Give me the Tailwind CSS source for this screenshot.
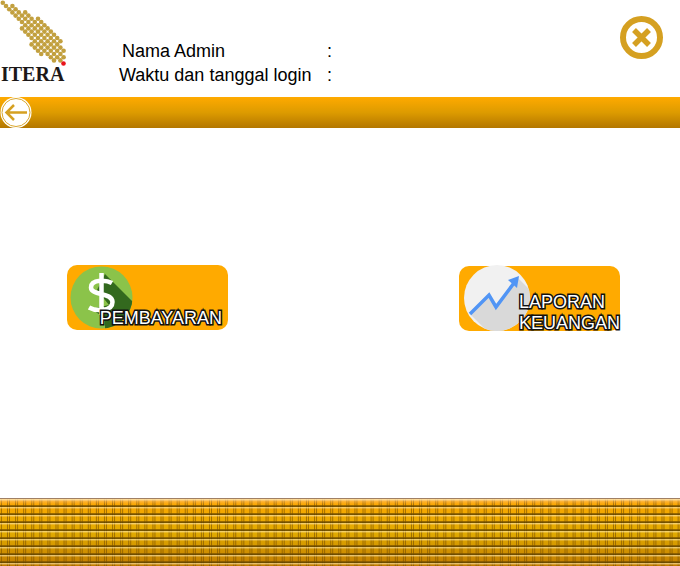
<!DOCTYPE html>
<html lang="id">
<head>
<meta charset="utf-8">
<meta name="viewport" content="width=device-width, initial-scale=1">
<title>ITERA Admin</title>
<script src="https://cdn.jsdelivr.net/npm/@tailwindcss/browser@4"></script>
</head>
<body class="flex min-h-screen flex-col bg-white font-['Liberation_Sans',Arial,sans-serif] text-black">
<header class="flex h-[97px] items-start">
  <svg class="h-[84px] w-[68px] shrink-0 overflow-visible" viewBox="0 0 68 84" role="img" aria-label="ITERA">
    <g id="dots" fill="#c2a03f"></g>
    <circle cx="63.5" cy="63.5" r="2.3" fill="#e8141c"/>
    <text x="1" y="81" font-family="Liberation Serif, serif" font-weight="700" font-size="20" fill="#1c1818">ITERA</text>
  </svg>
  <dl class="ml-[51px] grid grid-cols-[208px_auto] pt-[39px] text-[18px] leading-6">
    <dt class="pl-[3px]">Nama Admin</dt><dd>:</dd>
    <dt>Waktu dan tanggal login</dt><dd>:</dd>
  </dl>
  <button type="button" aria-label="Tutup" class="mt-4 mr-4 ml-auto size-[44px]">
    <svg class="size-full" viewBox="0 0 44 44"><circle cx="21.500" cy="21.500" r="18.500" fill="none" stroke="#d5a021" stroke-width="6"/><path d="M14 14L29 29M29 14L14 29" stroke="#d5a021" stroke-width="5.500"/></svg>
  </button>
</header>
<nav class="flex h-[31px] items-start bg-linear-to-b from-[#ffaa00] via-[#dd9b00] to-[#b37700]">
  <button type="button" aria-label="Kembali" class="size-8">
    <svg class="size-full" viewBox="0 0 32 32"><circle cx="16" cy="15.500" r="15.500" fill="#fff"/><circle cx="16" cy="15.500" r="14" fill="none" stroke="#d9a62b"/><path d="M27 15.500H7M14 8L6.500 15.500L14 23" fill="none" stroke="#d5a021" stroke-width="2.500"/></svg>
  </button>
</nav>
<main class="flex grow items-start justify-between pt-[137px] pr-[60px] pl-[67px]">
  <button type="button" class="relative h-[65px] w-[161px] rounded-[10px] bg-[#ffaa00]">
    <svg class="h-full w-[70px] overflow-visible" viewBox="0 0 70 65" aria-hidden="true"><defs><clipPath id="coin"><circle cx="34.500" cy="32.500" r="31"/></clipPath></defs><circle cx="34.500" cy="32.500" r="31" fill="#8bc34a"/><path clip-path="url(#coin)" d="M38 9L72 43V70H38V53L24 44L42 40L30 25Z" fill="#33691e"/><path d="M45 18C40 15 24 13.500 24 22.500C24 31 45.500 27 45.500 37C45.500 47 28 46 22 42.500M34.500 8V50" fill="none" stroke="#fff" stroke-width="4.500"/></svg>
    <span class="absolute right-[6px] bottom-0 text-[18px] leading-6 text-white [paint-order:stroke_fill] [-webkit-text-stroke:3px_#111]">PEMBAYARAN</span>
  </button>
  <button type="button" class="relative mt-px h-[65px] w-[161px] rounded-[10px] bg-[#ffaa00]">
    <svg class="h-full w-[74px] overflow-visible" viewBox="0 0 74 65" aria-hidden="true"><defs><clipPath id="disc"><circle cx="38" cy="32" r="33"/></clipPath></defs><circle cx="38" cy="32" r="33" fill="#f1f1f1"/><path clip-path="url(#disc)" d="M11 48L30 29L37 41L59 12L80 33V70H33Z" fill="#d9d9d9"/><path d="M11 48L30 29L37 41L55 17" fill="none" stroke="#5195f5" stroke-width="3.500"/><path d="M49 14L60 10L58 22Z" fill="#5195f5"/></svg>
    <span class="absolute top-[26px] left-[60px] text-left text-[18px] leading-[21px] text-white [paint-order:stroke_fill] [-webkit-text-stroke:3px_#111]">LAPORAN KEUANGAN</span>
  </button>
</main>
<footer class="h-[68px] bg-linear-to-b from-[#ffa500] via-[#e2ac00] to-[#c27c00]">
  <svg class="block size-full" aria-hidden="true">
    <defs>
      <pattern id="slats" y="1" width="8" height="8" patternUnits="userSpaceOnUse">
        <rect width="8" height="1" fill="#ffe9b0" fill-opacity=".6"/>
        <rect y="1" width="8" height="1" fill="#ffe9b0" fill-opacity=".25"/>
        <rect y="6" width="8" height="1" fill="#7a5200" fill-opacity=".75"/>
        <rect y="7" width="8" height="1" fill="#5a4000" fill-opacity=".8"/>
      </pattern>
      <linearGradient id="glow" x2="0" y2="1"><stop stop-color="#ffd9b0" stop-opacity=".7"/><stop offset="1" stop-color="#ffb040" stop-opacity="0"/></linearGradient>
    </defs>
    <path id="weave" fill="#7c5200" fill-opacity=".65"/>
    <rect width="100%" height="6" y="1" fill="url(#glow)"/>
    <rect width="100%" height="67" y="1" fill="url(#slats)"/>
    <rect width="100%" height="1" fill="#a08064"/>
  </svg>
</footer>
<script>
// Emblem: for each lattice row, the columns that hold a dot.
const rows = [[0],[1,3],[2,4],[3,5,7],[4,6,8],[5,7,9,11],[6,8,10,12],[7,9,11,13],[6,8,10,12,14],[7,9,11,13,15],[8,10,12,14,16],[9,11,13,15,17],[10,12,14,16,18],[9,11,13,15,17],[10,12,14,16,18],[11,13,15,17,19],[12,14,16,18],[15,17,19],[16,18]];
document.getElementById('dots').innerHTML = rows.map((cols, r) =>
  cols.map(c => `<circle cx="${2.8 + c * 3.2}" cy="${2.8 + r * 3.2}" r="2.3"/>`).join('')).join('');
// Footer weave: pairs of thin vertical threads.
let d = '';
for (let x = -1.08; x < 3000; x += 8.08) d += `M${x} 0h1v68h-1zM${x + 2} 0h1v68h-1z`;
document.getElementById('weave').setAttribute('d', d);
</script>
</body>
</html>
